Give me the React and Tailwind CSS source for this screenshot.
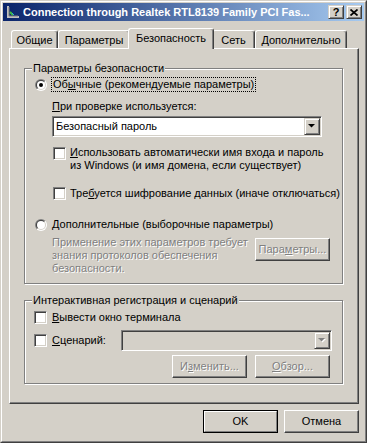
import clsx from 'clsx'

const sunken =
  'border border-t-[#808080] border-l-[#808080] border-r-white border-b-white shadow-[inset_1px_1px_0_#404040,inset_-1px_-1px_0_#d4d0c8]'
const raised =
  'border border-t-white border-l-white border-r-[#404040] border-b-[#404040] shadow-[inset_-1px_-1px_0_#808080]'
const dimText = 'text-[#808080] [text-shadow:1px_1px_0_#fff]'

function Key({ children }) {
  return <u className="underline">{children}</u>
}

function Radio({ checked }) {
  return (
    <span className="flex h-[12px] w-[12px] shrink-0 rounded-full bg-[linear-gradient(135deg,#808080_50%,#fff_50%)] p-px">
      <span className="flex h-full w-full rounded-full bg-[linear-gradient(135deg,#404040_50%,#d4d0c8_50%)] p-px">
        <span className="flex h-full w-full items-center justify-center rounded-full bg-white">
          {checked && <span className="h-[4px] w-[4px] rounded-full bg-black" />}
        </span>
      </span>
    </span>
  )
}

function Checkbox({ className }) {
  return <span className={clsx('block h-[13px] w-[13px] shrink-0 bg-white', sunken, className)} />
}

function Arrow({ disabled }) {
  return (
    <svg width="8" height="5" viewBox="0 0 8 5" className="overflow-visible">
      {disabled && <path d="M1 1h7L4.5 4.5z" fill="#fff" />}
      <path d="M0 0h7L3.5 3.5z" fill={disabled ? '#808080' : '#000'} />
    </svg>
  )
}

function Combo({ value, disabled, className }) {
  return (
    <div className={clsx('flex h-[21px] p-px', sunken, disabled ? 'bg-[#d4d0c8]' : 'bg-white', className)}>
      <div className="flex flex-1 items-center whitespace-nowrap pl-[2px]">{value}</div>
      <div className="flex w-[16px] items-center justify-center border border-t-[#d4d0c8] border-l-[#d4d0c8] border-r-[#404040] border-b-[#404040] bg-[#d4d0c8] shadow-[inset_1px_1px_0_#fff,inset_-1px_-1px_0_#808080]">
        <Arrow disabled={disabled} />
      </div>
    </div>
  )
}

function Button({ children, isDefault, disabled, className }) {
  return (
    <div className={clsx('h-[23px] w-[75px] shrink-0', isDefault && 'border border-black', className)}>
      <div
        className={clsx(
          'flex h-full w-full items-center justify-center whitespace-nowrap',
          isDefault
            ? 'border border-t-white border-l-white border-r-[#808080] border-b-[#808080]'
            : raised,
          disabled && dimText,
        )}
      >
        {children}
      </div>
    </div>
  )
}

function CaptionButton({ children }) {
  return (
    <div className="flex h-[14px] w-[16px] items-center justify-center border border-t-[#d4d0c8] border-l-[#d4d0c8] border-r-[#404040] border-b-[#404040] bg-[#d4d0c8] shadow-[inset_1px_1px_0_#fff,inset_-1px_-1px_0_#808080]">
      {children}
    </div>
  )
}

function ConnectionIcon() {
  return (
    <svg width="16" height="16" viewBox="0 0 16 16">
      <path d="M3 2v11h11" fill="none" stroke="#c0c0c0" strokeWidth="2" />
      <path d="M4 3v9h9" fill="none" stroke="#808080" strokeWidth="1" />
      <path d="M5 8l3 3" stroke="#3fbf3f" strokeWidth="2" />
      <path d="M7 9l2 2" stroke="#30a0e0" strokeWidth="1" />
    </svg>
  )
}

function TitleBar() {
  return (
    <div className="flex h-[18px] shrink-0 items-center bg-[linear-gradient(90deg,#0a246a,#a6caf0)] pl-[2px] pr-[2px]">
      <ConnectionIcon />
      <div className="ml-[2px] flex-1 overflow-hidden whitespace-nowrap text-[11px] font-bold text-white">
        Connection through Realtek RTL8139 Family PCI Fas...
      </div>
      <div className="flex gap-[2px]">
        <CaptionButton>
          <span className="text-[11px] font-bold leading-none text-black">?</span>
        </CaptionButton>
        <CaptionButton>
          <svg width="8" height="7" viewBox="0 0 8 7">
            <path d="M0.5 0.5L7.5 6.5M7.5 0.5L0.5 6.5" stroke="#000" strokeWidth="1.7" />
          </svg>
        </CaptionButton>
      </div>
    </div>
  )
}

const tabs = [
  { label: 'Общие', width: 'w-[47px]' },
  { label: 'Параметры', width: 'w-[72px]' },
  { label: 'Безопасность', width: 'w-[86px]', active: true },
  { label: 'Сеть', width: 'w-[43px]' },
  { label: 'Дополнительно', width: 'w-[92px]' },
]

function Tabs() {
  return (
    <div className="ml-[6px] mt-[7px] flex h-[20px] shrink-0 items-end pl-[2px]">
      {tabs.map((tab) =>
        tab.active ? (
          <div
            key={tab.label}
            className={clsx(
              'relative z-10 -mx-[2px] -mb-px flex h-[21px] shrink-0 justify-center rounded-t-[3px] border-t border-l border-r border-t-white border-l-white border-r-[#404040] bg-[#d4d0c8] pt-[3px] shadow-[inset_-1px_0_0_#808080]',
              tab.width,
            )}
          >
            {tab.label}
          </div>
        ) : (
          <div
            key={tab.label}
            className={clsx(
              'flex h-[18px] shrink-0 justify-center rounded-t-[3px] border-t border-l border-r border-t-white border-l-white border-r-[#404040] pt-[3px] shadow-[inset_-1px_0_0_#808080]',
              tab.width,
            )}
          >
            {tab.label}
          </div>
        ),
      )}
    </div>
  )
}

function Group({ title, className, children }) {
  return (
    <div
      className={clsx(
        'relative w-[319px] shrink-0 border border-[#808080] shadow-[1px_1px_0_#fff,inset_1px_1px_0_#fff]',
        className,
      )}
    >
      <span className="absolute -top-[7px] left-[7px] whitespace-nowrap bg-[#d4d0c8] px-px">{title}</span>
      {children}
    </div>
  )
}

export default function App() {
  return (
    <div className="h-[443px] w-[367px] border border-t-[#d4d0c8] border-l-[#d4d0c8] border-r-[#404040] border-b-[#404040] bg-[#d4d0c8] font-['Liberation_Sans',Arial,sans-serif] text-[11px] leading-[13px] text-black">
      <div className="flex h-full flex-col border border-t-white border-l-white border-r-[#808080] border-b-[#808080] p-px">
        <TitleBar />
        <Tabs />

        <div className="ml-[6px] flex h-[356px] w-[350px] shrink-0 flex-col border border-t-white border-l-white border-r-[#404040] border-b-[#404040] pl-[14px] shadow-[inset_-1px_-1px_0_#808080]">
          <Group title="Параметры безопасности" className="mt-[19px] h-[216px]">
            <div className="mt-[7px] flex h-[17px] items-center pl-[10px]">
              <Radio checked />
              <span className="ml-[4px] whitespace-nowrap border border-dotted border-black px-px">
                Об<Key>ы</Key>чные (рекомендуемые параметры)
              </span>
            </div>

            <div className="ml-[27px] mt-[7px] whitespace-nowrap">
              <Key>П</Key>ри проверке используется:
            </div>

            <Combo value="Безопасный пароль" className="ml-[27px] mt-[3px] w-[270px]" />

            <div className="mt-[9px] flex pl-[28px]">
              <Checkbox className="mt-px" />
              <div className="ml-[4px] whitespace-nowrap">
                <Key>И</Key>спользовать автоматически имя входа и пароль
                <br />
                из Windows (и имя домена, если существует)
              </div>
            </div>

            <div className="mt-[15px] flex pl-[28px]">
              <Checkbox />
              <div className="ml-[4px] whitespace-nowrap">
                Тре<Key>б</Key>уется шифрование данных (иначе отключаться)
              </div>
            </div>

            <div className="mt-[18px] flex items-center pl-[10px]">
              <Radio />
              <span className="ml-[5px] whitespace-nowrap">
                <Key>Д</Key>ополнительные (выборочные параметры)
              </span>
            </div>

            <div className="mt-[5px] flex pl-[27px]">
              <div className={clsx('w-[203px] whitespace-nowrap', dimText)}>
                Применение этих параметров требует
                <br />
                знания протоколов обеспечения
                <br />
                безопасности.
              </div>
              <Button disabled className="mt-[2px]">
                <span>
                  Пара<Key>м</Key>етры...
                </span>
              </Button>
            </div>
          </Group>

          <Group title="Интерактивная регистрация и сценарий" className="mt-[16px] h-[84px]">
            <div className="mt-[10px] flex items-center pl-[9px]">
              <Checkbox />
              <span className="ml-[5px] whitespace-nowrap">
                <Key>В</Key>ывести окно терминала
              </span>
            </div>

            <div className="mt-[6px] flex h-[21px] items-center pl-[9px]">
              <Checkbox />
              <span className="ml-[5px] w-[69px] whitespace-nowrap">
                <Key>С</Key>ценарий:
              </span>
              <Combo disabled className="w-[211px]" />
            </div>

            <div className="mt-[4px] flex gap-[8px] pl-[147px]">
              <Button disabled>
                <span>
                  И<Key>з</Key>менить...
                </span>
              </Button>
              <Button disabled>
                <span>
                  <Key>О</Key>бзор...
                </span>
              </Button>
            </div>
          </Group>
        </div>

        <div className="mt-[6px] flex justify-end gap-[6px] pr-[5px]">
          <Button isDefault>OK</Button>
          <Button>Отмена</Button>
        </div>
      </div>
    </div>
  )
}
